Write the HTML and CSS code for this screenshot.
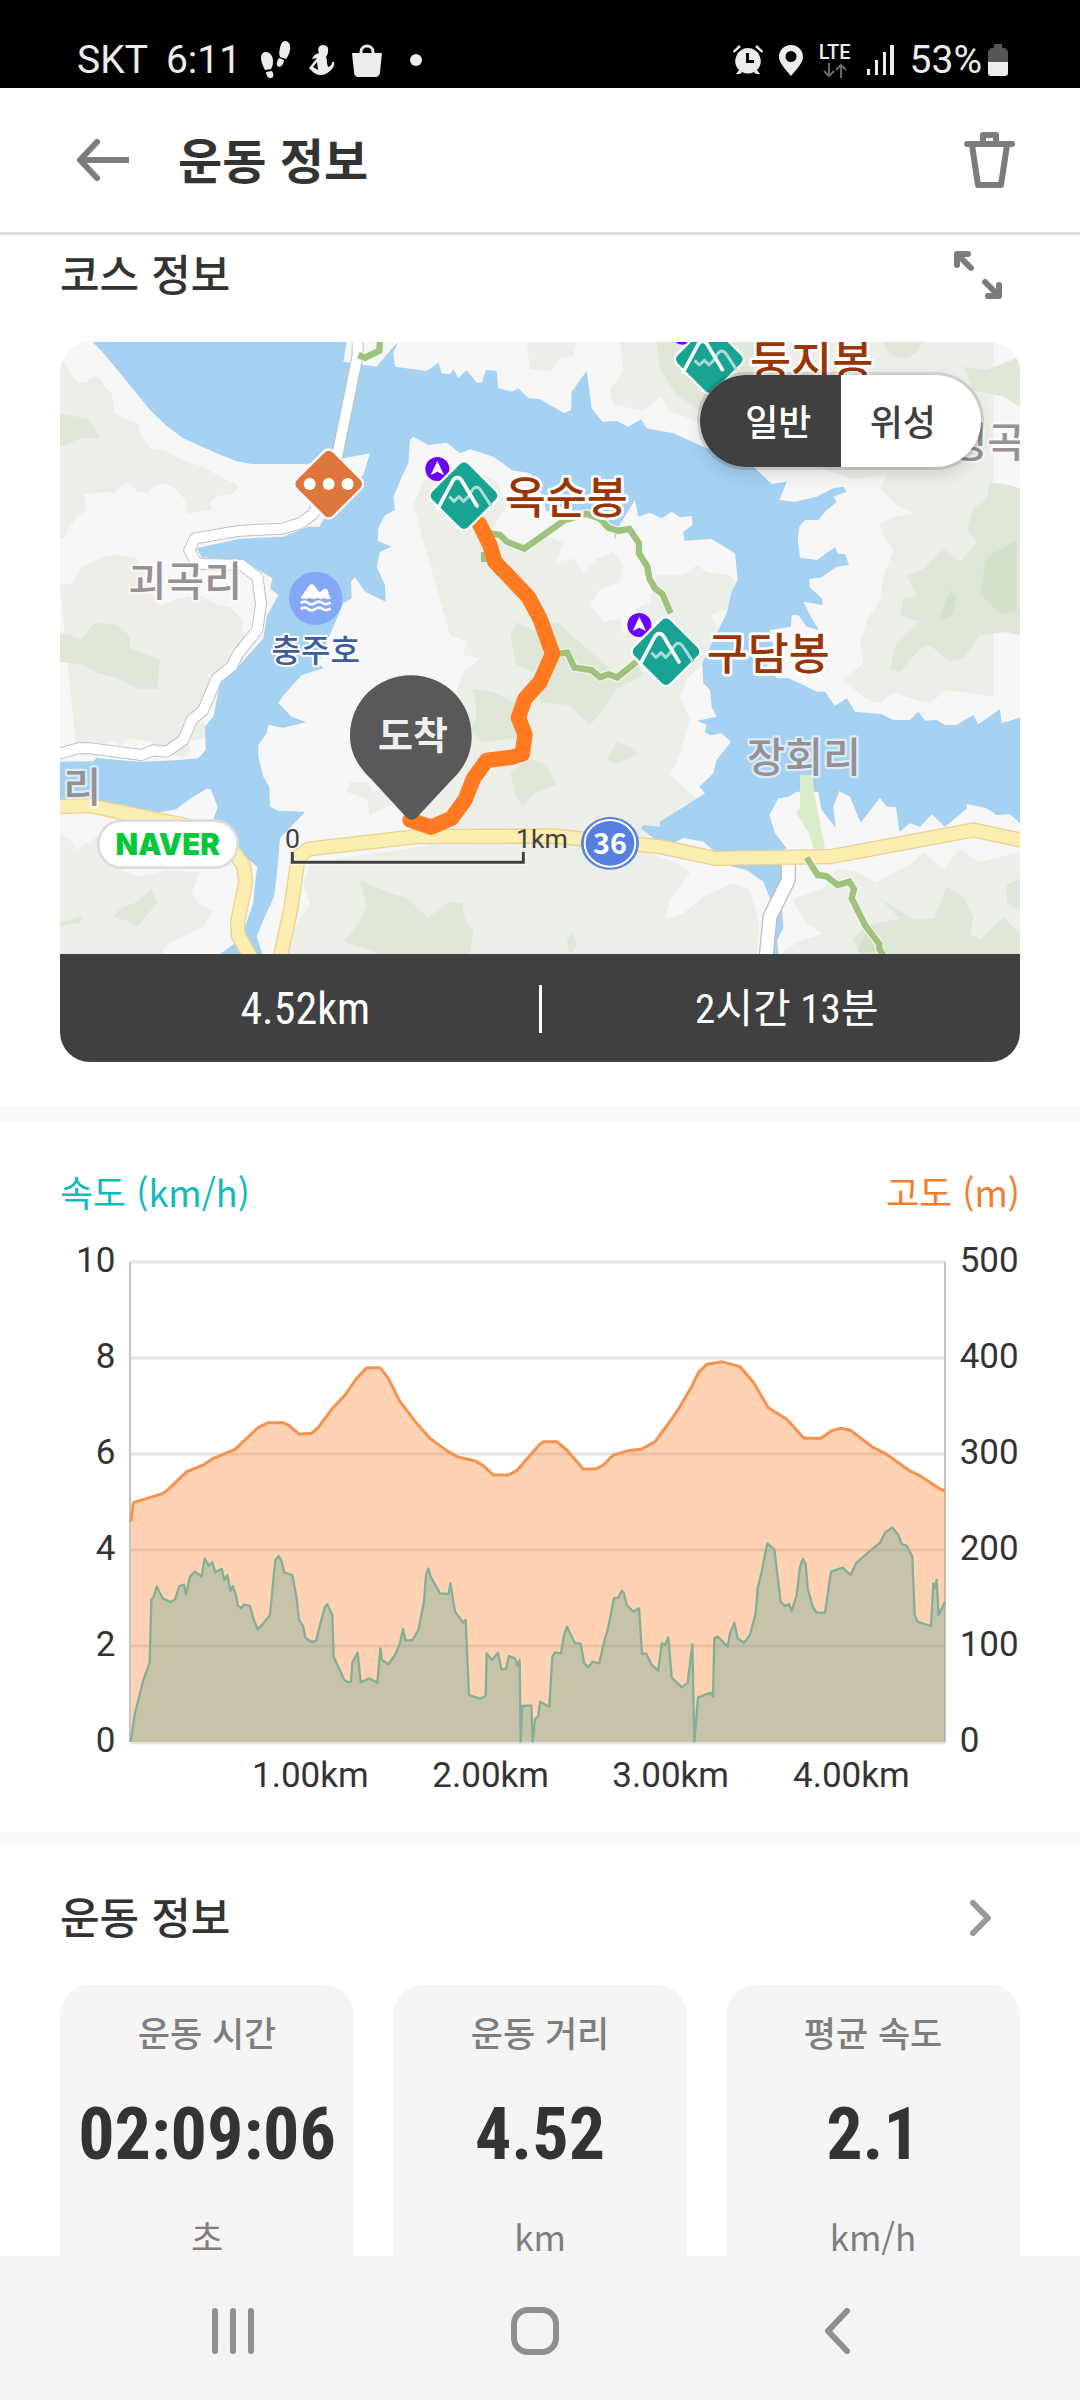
FILE: index.html
```html
<!DOCTYPE html>
<html lang="ko">

<head>
    <meta charset="utf-8">
    <meta name="viewport" content="width=device-width, initial-scale=1">
    <title>운동 정보</title>
    <link rel="stylesheet" href="styles.css">
</head>

<body>
    <div class="status">
        <div class="status-left">
            <span>SKT</span>
            <span class="clock">6:11</span>
            <svg class="ico-steps" width="30" height="38" viewBox="0 0 30 38">
                <path d="M5 11c4 0 7 4 7 9 0 4-1 6-2 8l-6 1c-2-4-4-8-4-12 0-4 2-6 5-6zM5 31l6-1c2 3 2 7-1 7-3 1-5-3-5-6zM24 0c4 0 6 4 5 9-1 4-2 7-4 9l-6-2c-1-2-1-5 0-9 1-4 2-7 5-7zM18 17l5 2c0 4-3 7-5 7-3-1-3-5 0-9z" />
            </svg>
            <svg class="ico-body" width="26" height="30" viewBox="0 0 26 30">
                <path d="M14 0c4 0 6 3 5 6 0 3-1 4-2 6 1 2 1 4 1 6l1 4c3-1 4-2 4-5h2c1 3-1 6-3 8-4 4-7 5-11 5-5 0-8-4-11-7l8-10-5 1c1-3 3-5 7-6-2-4 0-8 4-8zM8 17l-4 5 5 3z" fill-rule="evenodd" />
            </svg>
            <svg class="ico-bag" width="30" height="33" viewBox="0 0 30 33">
                <path d="M0 9h30l-2 19c0 3-2 5-5 5H7c-3 0-5-2-5-5z" />
                <path d="M9 12V8c0-8 12-8 12 0v4" fill="none" stroke="#ececec" stroke-width="3" />
            </svg>
            <span class="dot"></span>
        </div>
        <div class="status-right">
            <svg width="30" height="30" viewBox="0 0 30 30">
                <path d="M15 3a13 13 0 0 1 9 22l3 4h-4l-2-2a13 13 0 0 1-12 0l-2 2H3l3-4A13 13 0 0 1 15 3zm-2 5v10h8v-3h-5V8zM0 6l6-6 2 2-7 6zM30 6l-6-6-2 2 7 6z" fill-rule="evenodd" />
            </svg>
            <svg width="24" height="31" viewBox="0 0 24 31">
                <path d="M12 0c7 0 12 5 12 12 0 6-7 13-12 19C7 25 0 18 0 12 0 5 5 0 12 0zm0 6a5 5 0 1 0 0 11 5 5 0 0 0 0-11z" fill-rule="evenodd" />
            </svg>
            <span class="lte">
                <span>LTE</span>
                <svg width="24" height="15" viewBox="0 0 24 15">
                    <path d="M6 0v13M1 8l5 5 5-5M18 15V2M13 7l5-5 5 5" fill="none" stroke="#6a6a6a" stroke-width="2" />
                </svg>
            </span>
            <svg width="27" height="30" viewBox="0 0 27 30">
                <path d="M0 24h3v6H0zM8 15h3v15H8zM16 7h3v23h-3zM23 0h4v30h-4z" />
            </svg>
            <span class="percent">53%</span>
            <svg width="20" height="32" viewBox="0 0 20 32">
                <path d="M6 0h8v4h3l3 3v11H0V7l3-3h3z" fill="#555" />
                <path d="M0 18h20v11q0 3-3 3H3q-3 0-3-3z" />
            </svg>
        </div>
    </div>

    <header class="topbar">
        <button class="icon-btn" aria-label="뒤로">
            <svg width="53" height="44" viewBox="0 0 53 44">
                <path d="M53 22H5M21 4L4 22l17 18" fill="none" stroke="#7c7c7c" stroke-width="6" stroke-linejoin="round" stroke-linecap="round" />
            </svg>
        </button>
        <h1>운동 정보</h1>
        <button class="icon-btn trash" aria-label="삭제">
            <svg width="51" height="56" viewBox="0 0 51 56">
                <path d="M3 12h45M19 11V3h13v8M8 13l6 40h23l6-40" fill="none" stroke="#7c7c7c" stroke-width="6" stroke-linejoin="round" stroke-linecap="round" />
            </svg>
        </button>
    </header>

    <main>
        <section class="course">
            <div class="section-head">
                <h2>코스 정보</h2>
                <button class="icon-btn expand" aria-label="지도 확대">
                    <svg width="48" height="48" viewBox="0 0 48 48">
                        <path d="M17 17L4 4M14 3H3v11M31 31l13 13M34 45h11V34" fill="none" stroke="#7c7c7c" stroke-width="6" stroke-linecap="round" stroke-linejoin="round" />
                        <path d="M3 3h9l-9 9zM45 45h-9l9-9z" fill="#7c7c7c" />
                    </svg>
                </button>
            </div>

            <div class="map-card">
                <div class="map">
                    <svg class="map-canvas" viewBox="0 0 2880 1836" role="img" aria-label="코스 지도">
                        <defs>
                            <g id="peak">
                                <circle cx="-80" cy="-80" r="36" fill="#6a05ff" />
                                <path d="M-80-104l20 42-20-10-20 10z" fill="#fff" />
                                <rect x="-79" y="-79" width="158" height="158" rx="20" transform="rotate(45)" fill="#18a393" stroke="#fff" stroke-width="7" />
                                <path d="M-44 3l14 14 15-14 14 14 17-17M20-8c10-22 22-22 32-6l30 46" fill="none" stroke="#a9dcd6" stroke-width="9" stroke-linejoin="round" />
                                <path d="M-78 38l44-82c8-14 20-14 28 0l45 75" fill="none" stroke="#fff" stroke-width="11" stroke-linecap="round" stroke-linejoin="round" />
                            </g>
                        </defs>

                        <rect width="2880" height="1836" fill="#f7f7f7" />

                        <!-- hills -->
                        <g fill="#ecefe8">
                            <path d="M0 54l20 15 20 40 20 14 20-2 20-18 20 6 15 25 20 20 10 60 38 20 33 10 5 35 30 40 40 5 60 32 60 18 50 30 46 22 10 10-20 20-40 5-28 20 8 24-26 2-48 8-8-40-25-32-38-20-28 6-22 24-30-5-30-28-20 14-20 22-20-6-72 6 10 46-30 24-30 40-5 20-25 8z" />
                            <path d="M0 730l40-8 25-48 60-26 40-10 60 8 30 50 20 60 25 34 50-20 70-12 50 30 40 8 40 40-6 30 20 20-20 30-10 40-76 36-18 10 40 16-30 60-22 60 40 40-86 22 10 25-20 20-60-12-40-36-60-8-30 22-30-16-40 34-62 5z" />
                            <path d="M0 1474l30 20 20 30 60-40 30 20 40 80 60 20 80-20 100 5-25 65 25 34 40 20-30 46-50 26-50 20-20 20v16H0z" />
                            <path d="M750 1564l400-60 480 20 140 10 80 30 40 30-60 80-16 60 56-20 60-50 90-40 50 20 28 100-6 92H680l30-90 40-60-20-60z" />
                            <path d="M1060 490l30-70 70-50 80 10 70 40 30 70-50 80 40 40 80 20 40-50 60 20-20 60 50-10 30 40 40-40 50-20 30 40-10 50-60 20-30 50 40 50 50-10 10 50 30-20 10-60 40-20 20-80 80 0 40-30 30 20 70 10 30 40-40 60-50 20 30 50-20 70-80 70-20 60 30 60-30 110-30 60 80 70-60 30-30 70-130 30-40 70-110 40h-330l-100-50-30-150-90-20-60 30-10-50-60-20 10-30 50 0 20 30 40-20-20-60 60-70-60-20 20-50-60-20 20-50 60-10 40-40 50 60 60 40 50 90 20-10-10-110-20-30 20-60 50-40-50-10 10-40-50-20z" />
                            <path d="M1680 0l10 90-40 50 10 48 90 18 50-40 30 40 60 24 200 90 290 90 100-10-20 40 50 50 50 24-60 10-40 20 10 40 30 40-30 80-10 70-40 60-20 70 10 60-60 50 60 50 40 20 50-30 70 20 40 10 50-40 140 20V0z" />
                            <path d="M2200 1670l90-30 40-60 60 10 60 30 110-60 30-30 60 50 50-60 60 40 120-30v306h-720l60-40 70-20-50-30-40-66z" />
                            <path d="M1400 0l10 80 60 10 30-40 40-10 10-40zM2390 1044l40 20 30 20 40-40z" />
                        </g>
                        <g fill="#dfe7d9">
                            <path d="M0 215l80 14 20 22 22 39-60-2-30 14-32 14z" />
                            <path d="M0 870l65 20 40-48 60 5 45 35v35l90 35-8 90-52 0-70-35-60-15-40-24-70-8z" />
                            <path d="M275 1639l15 45-60 72-20-16-50-16 20-24 50-20zM0 1740l70-18-10 20-60 10z" />
                            <path d="M900 1614l90 40 50 14 65 61 60-50 40 5 14 60 21 20-10 72H960l-60-20-50-16 50-60 20-50z" />
                            <path d="M1350 880l20-40 60 30 30 60-40 60-50-20zM1240 1040l60 10 80 40 20 80-40 20-90 10-40-30 20-50zM1350 1290l60-40 50 20 30 60-60 20-40 40-20-20z" />
                            <path d="M1440 850l50-10 80 70 100 90 60-40 20 40-80 40-40 60-40 50-60-60-90-10z" />
                            <path d="M1640 1250l30-50 50 20 14 15-60 30-20-4zM1790 0l10 80 50 80 60 40 90 30 90-50 30-180z" />
                            <path d="M2470 0l20 40 50 10 30-20 20-30zM2710 74l70 10 100-40v150l-50-30-90-20z" />
                            <path d="M2790 420l60 10 30 10v440l-40-10-80 10-50 70-40 10-60-50-30 10-60 70-30-10 20-80 70-60-60-20 10-50 40-10-30-60 50-20 60-60 50 40 50-60-30-40 20-60 40-30z" />
                            <path d="M2400 1836l-20-46 40-40 100-20-60-60 100 60 60 0 40-96 50 30 30 60-10 50 30 20 70-70 50 50v62zM2880 1610l-40 20 0 50 40 30zM1520 1790l20-20 10 40-20 26z" />
                        </g>
                        <path d="M2880 600l-90 50-20 110 60 60 50-10zM2650 830l30-80 20 20-10 50-20 16zM2400 1836l30-60 20-20 40 80z" transform="translate(-10 -5)" fill="#d4e1cb" />

                        <!-- lake -->
                        <path fill="#a5d1f2" d="M98 0L135 39L185 99L270 204L320 252L370 289L470 334L530 358L575 366L740 366L850 349L930 334L910 399L880 440L790 534L778 554L745 554L670 584L540 590L410 619L425 646L540 654L580 674L638 709L630 739L655 759L620 824L610 889L530 979L480 1024L460 1124L435 1154L437 1224L415 1249L360 1254L245 1259L170 1254L110 1247L100 1258L0 1259V1380L90 1394L290 1412L348 1402L390 1370L440 1340L452 1342L473 1394L460 1434L530 1524L592 1574L585 1624L580 1684L555 1754L525 1804L480 1836H607L590 1784L610 1734L642 1664L650 1604L660 1489L735 1409L655 1406L630 1394L628 1334L610 1304L595 1244V1209L620 1174L625 1149L670 1157L738 1141L695 1124L655 1084L678 1044L660 1072L725 999L790 979L775 964L820 854L850 784L875 769L873 719L885 706L915 749L977 779L975 729L950 674L960 629L995 614L953 596L955 559L975 519L1005 504L1000 464L1030 394L1045 364L1050 294L1060 284L1105 309L1160 302L1200 334L1230 322L1300 344L1355 384L1410 394L1440 444L1460 509L1500 494L1660 554L1665 594L1675 554L1725 474L1735 524L1770 512L1805 529L1835 509L1860 526L1895 522L1898 549L1870 569L1873 596L1955 591L2025 634L2033 714L2015 749L2000 814L1950 914L1927 964L1930 1024L1950 1044L1955 1094L1970 1124L1912 1136L1940 1149L1935 1169L1950 1180L1985 1174L2013 1199L1970 1254L1960 1294L1918 1334L1935 1354L1800 1439V1454L1750 1449L1743 1459L1780 1489L1840 1504L1870 1487L1930 1499L1965 1529L2010 1572L2060 1584L2110 1619L2130 1669L2140 1836H2155L2152 1794L2170 1759L2165 1684L2170 1524L2180 1519L2145 1474L2128 1419L2155 1369L2185 1364L2210 1349H2275L2285 1404L2327 1457L2320 1394L2338 1347L2370 1364L2402 1442L2460 1367L2480 1394L2508 1396L2518 1469L2550 1444L2580 1454L2615 1417L2655 1454L2720 1400V1386L2780 1399L2810 1419L2850 1417L2880 1444V1127L2825 1144L2820 1102L2755 1147L2740 1119L2690 1149H2655L2630 1134L2595 1136L2575 1109L2550 1134H2500L2465 1117L2385 1109L2360 1069L2325 1092L2295 1049H2270L2230 1029L2185 1009H2150L2120 970L2150 964L2130 864L2193 854L2195 819H2215L2240 854L2277 864L2255 829L2230 779L2288 789L2285 769L2248 734V712L2285 706L2330 674L2367 669L2355 636H2335L2325 616L2270 654L2220 647L2213 594L2218 554L2235 534H2275L2300 504L2330 481L2320 464L2360 449L2350 434L2320 439L2270 464L2205 479L2158 474L2180 419L2135 426L2080 374L2040 349L1940 319L1840 274L1760 259L1743 232L1705 254L1670 237L1627 239L1595 199L1580 87L1535 149L1533 204L1512 214L1440 172L1405 169L1375 139L1355 149L1315 139L1310 86L1278 84L1265 122H1250L1220 84L1195 109L1180 82L1170 96L1145 94L1135 62L1100 87L1005 74L1000 34L1015 0L995 20L950 74L850 59L860 0Z" />
                        <path d="M2220 1299h38l4 50 13 70 20 101h-33l-17-50-37-58 12-13z" fill="#d8edc8" />

                        <!-- roads -->
                        <g fill="none" stroke-linejoin="round">
                            <path d="M893-20V40L832 340L790 430L760 516L720 544L665 560L540 566L405 589L388 624L408 662L430 666L545 669L592 705L603 784L592 864L535 934L515 974L470 1009L430 1104L395 1134L370 1194L320 1229L280 1225L245 1239L90 1219H55L-20 1240" stroke="#bfbfbf" stroke-width="36" />
                            <path d="M893-20V40L832 340L790 430L760 516L720 544L665 560L540 566L405 589L388 624L408 662L430 666L545 669L592 705L603 784L592 864L535 934L515 974L470 1009L430 1104L395 1134L370 1194L320 1229L280 1225L245 1239L90 1219H55L-20 1240" stroke="#fff" stroke-width="30" />
                            <path d="M2185 1550V1614L2130 1724L2118 1850" stroke="#bfbfbf" stroke-width="46" />
                            <path d="M2185 1550V1614L2130 1724L2118 1850" stroke="#fff" stroke-width="38" />
                            <path d="M-20 1394L90 1391L370 1449L500 1500L550 1570L557 1619L533 1740L535 1780L575 1850M660 1850L692 1704L715 1545L745 1521L1070 1484L1480 1482L1800 1514L1965 1549L2310 1544L2740 1464L2900 1498" stroke="#e9d394" stroke-width="46" />
                            <path d="M-20 1394L90 1391L370 1449L500 1500L550 1570L557 1619L533 1740L535 1780L575 1850M660 1850L692 1704L715 1545L745 1521L1070 1484L1480 1482L1800 1514L1965 1549L2310 1544L2740 1464L2900 1498" stroke="#fceeb1" stroke-width="38" />
                        </g>

                        <!-- trails -->
                        <g fill="none">
                            <path d="M895 39L915 47L958 26L960-10M1272 630V660M1290 574L1320 579L1340 599L1393 620L1515 534L1580 515L1620 530L1645 557L1675 566L1708 561L1737 604V634L1762 674L1768 709L1785 739L1807 756L1832 814M1500 934L1522 932L1543 977L1595 984L1620 1006L1645 997L1672 1006L1730 959M2240 1547L2273 1599L2298 1602L2333 1629L2368 1619L2382 1641L2375 1669L2415 1749L2458 1806V1820L2475 1850" stroke="#f2f7ec" stroke-width="26" />
                            <path d="M895 39L915 47L958 26L960-10M1272 630V660M1290 574L1320 579L1340 599L1393 620L1515 534L1580 515L1620 530L1645 557L1675 566L1708 561L1737 604V634L1762 674L1768 709L1785 739L1807 756L1832 814M1500 934L1522 932L1543 977L1595 984L1620 1006L1645 997L1672 1006L1730 959M2240 1547L2273 1599L2298 1602L2333 1629L2368 1619L2382 1641L2375 1669L2415 1749L2458 1806V1820L2475 1850" stroke="#a0c27f" stroke-width="19" />
                        </g>

                        <!-- recorded route -->
                        <path d="M1258 545L1290 610L1305 660L1405 765L1440 830L1478 935L1440 1020L1395 1070L1375 1127L1395 1177L1387 1236L1355 1246L1280 1255L1240 1310L1215 1374L1175 1429L1113 1456L1050 1434" fill="none" stroke="#ff7a20" stroke-width="46" stroke-linejoin="round" stroke-linecap="round" />

                        <!-- villages -->
                        <g class="place">
                            <text x="205" y="762">괴곡리</text>
                            <text x="2061" y="1290">장회리</text>
                            <text x="10" y="1380">리</text>
                            <text x="2668" y="345">정곡</text>
                        </g>

                        <!-- markers -->
                        <use href="#peak" x="1212" y="461" />
                        <use href="#peak" x="1818" y="929" />
                        <use href="#peak" x="1948" y="52" />
                        <g class="peak-name">
                            <text x="1334" y="517">옥순봉</text>
                            <text x="1940" y="984">구담봉</text>
                            <text x="2070" y="107">둥지봉</text>
                        </g>
                        <g transform="translate(806 426)">
                            <rect x="-79" y="-79" width="158" height="158" rx="20" transform="rotate(45)" fill="#de763e" stroke="#fff" stroke-width="7" />
                            <circle cx="-57" r="18" fill="#fff" />
                            <circle r="18" fill="#fff" />
                            <circle cx="57" r="18" fill="#fff" />
                        </g>
                        <g transform="translate(767 769)">
                            <circle r="80" fill="#84a7f8" />
                            <path d="M-45-2L-20-38q8-10 16 0L12-18l16-12q12 6 10 16l8 14q-12 6-20-2-12 8-20 0-12 8-24 0-12 8-27 0z" fill="#fff" />
                            <path d="M-45 14q11-8 22 0t22 0 22 0 24-2M-45 32q11-8 22 0t22 0 22 0 24-2" fill="none" stroke="#fff" stroke-width="8" />
                        </g>
                        <text class="lake-name" x="767" y="961">충주호</text>

                        <ellipse cx="1650" cy="1504" rx="87" ry="79" fill="#5580e2" />
                        <ellipse cx="1650" cy="1504" rx="76" ry="70" fill="none" stroke="#fff" stroke-width="6" />
                        <text class="route-no" x="1650" y="1535">36</text>

                        <!-- finish pin -->
                        <path d="M1053 1000c102 0 182 80 182 182 0 54-22 96-60 132l-104 112q-16 16-32 0L934 1312c-38-36-64-78-64-130 0-102 81-182 183-182z" fill="#595959" />
                        <text class="finish" x="1059" y="1220">도착</text>

                        <rect x="115" y="1436" width="418" height="141" rx="70" fill="#fff" stroke="#dcdcda" stroke-width="8" />
                        <text class="brand" x="323" y="1539">NAVER</text>

                        <path d="M697 1530v31h693v-31" fill="none" stroke="#fff" stroke-width="17" opacity=".6" />
                        <path d="M697 1530v31h693v-31" fill="none" stroke="#404040" stroke-width="9" />
                        <g class="scale">
                            <text x="675" y="1517">0</text>
                            <text x="1368" y="1517">1km</text>
                        </g>
                    </svg>
                    <div class="map-type">
                        <button class="on">일반</button>
                        <button>위성</button>
                    </div>
                </div>
                <div class="summary">
                    <span class="distance">4.52km</span>
                    <span class="time">2시간 13분</span>
                </div>
            </div>
        </section>

        <section class="chart">
            <div class="legend">
                <span class="speed">속도 (km/h)</span>
                <span class="height">고도 (m)</span>
            </div>
            <svg class="graph" viewBox="0 0 2880 1680" role="img" aria-label="속도와 고도 그래프">
                <path d="M210 66H2655M210 354H2655M210 642H2655M210 930H2655M210 1218H2655M210 1508H2655" stroke="#e3e3e3" stroke-width="9" />
                <path d="M210 66V1506M2655 66V1506" stroke="#c4c4c4" stroke-width="6" />

                <!-- altitude -->
                <path d="M213 1505V845L220 788L310 760L325 748L380 695L430 675L460 655L525 628L595 562L625 548H668L685 555L718 583L755 580L775 562L815 508L855 465L890 415L920 383H960L985 415L1020 485L1070 550L1110 595L1160 632L1195 652L1245 662L1270 677L1300 705H1345L1370 692L1440 612L1452 605H1490L1520 630L1570 687H1608L1630 675L1660 645L1705 632L1745 627L1785 605L1820 558L1855 508L1895 440L1915 398L1940 373L1985 365L2040 380L2080 427L2125 503L2180 538L2232 595H2283L2315 572L2340 565L2370 570L2440 623L2475 640L2550 693L2580 707L2640 747L2655 752V1505Z" fill="#ff7a20" fill-opacity=".34" />
                <path d="M213 845L220 788L310 760L325 748L380 695L430 675L460 655L525 628L595 562L625 548H668L685 555L718 583L755 580L775 562L815 508L855 465L890 415L920 383H960L985 415L1020 485L1070 550L1110 595L1160 632L1195 652L1245 662L1270 677L1300 705H1345L1370 692L1440 612L1452 605H1490L1520 630L1570 687H1608L1630 675L1660 645L1705 632L1745 627L1785 605L1820 558L1855 508L1895 440L1915 398L1940 373L1985 365L2040 380L2080 427L2125 503L2180 538L2232 595H2283L2315 572L2340 565L2370 570L2440 623L2475 640L2550 693L2580 707L2640 747L2655 752" fill="none" stroke="#f5924f" stroke-width="9" stroke-linejoin="round" />

                <!-- speed -->
                <path d="M212 1505L225 1420L250 1320L269 1268L274 1080L282 1068L290 1040L308 1075L332 1086L345 1078L358 1038L372 1034L378 1063L390 1010L405 995L425 1010L434 955L446 977L457 967L466 997L485 986L493 1020L502 1005L511 1053L518 1038L528 1065L533 1095L543 1105L552 1093L570 1098L580 1135L593 1168L610 1150L630 1125L640 1020L646 960L656 948L664 962L673 998L697 1005L710 1075L717 1140L730 1160L736 1193L755 1206L768 1203L776 1170L795 1100L802 1093L817 1125L821 1250L853 1320L865 1327L873 1324L877 1268L893 1238L902 1327L928 1315L952 1328L961 1225L966 1260L985 1273L1005 1245L1020 1210L1029 1166L1037 1202L1058 1200L1075 1170L1092 1085L1098 1005L1105 986L1112 1010L1140 1060L1166 1062L1171 1030L1185 1115L1210 1148L1217 1140L1227 1365L1260 1376L1277 1368L1280 1240L1296 1260L1314 1238L1324 1288L1338 1286L1347 1248L1365 1255L1373 1278L1379 1260L1382 1505L1387 1398L1414 1396L1418 1505L1425 1438L1435 1428L1440 1385L1468 1400L1477 1250L1485 1237L1503 1240L1512 1185L1521 1160L1545 1210H1562L1572 1268L1585 1282L1597 1265L1618 1270L1630 1215L1645 1160L1662 1075L1675 1073L1685 1052L1691 1057L1700 1095L1720 1115L1737 1105L1746 1242L1758 1240L1775 1275L1795 1292L1805 1210L1815 1215L1825 1192L1835 1312L1865 1342L1883 1328L1897 1213L1903 1505L1914 1372L1952 1358L1959 1370L1963 1195L1973 1190L2003 1220L2010 1180L2023 1148L2033 1195L2052 1208L2070 1185L2087 1120L2093 1045L2105 995L2122 910L2143 928L2162 1085L2175 1098L2187 1092L2195 1113L2210 1065L2220 980L2229 957L2237 972L2243 1045L2258 1100L2270 1118H2295L2313 995L2348 983L2372 1005L2388 970L2425 937L2460 908L2475 878L2497 862L2515 885L2525 912L2540 917L2557 950L2564 1125L2572 1145L2613 1158L2620 1030L2624 1045L2630 1020L2636 1125L2655 1085V1505Z" fill="#8fb4a0" fill-opacity=".5" />
                <path d="M212 1505L225 1420L250 1320L269 1268L274 1080L282 1068L290 1040L308 1075L332 1086L345 1078L358 1038L372 1034L378 1063L390 1010L405 995L425 1010L434 955L446 977L457 967L466 997L485 986L493 1020L502 1005L511 1053L518 1038L528 1065L533 1095L543 1105L552 1093L570 1098L580 1135L593 1168L610 1150L630 1125L640 1020L646 960L656 948L664 962L673 998L697 1005L710 1075L717 1140L730 1160L736 1193L755 1206L768 1203L776 1170L795 1100L802 1093L817 1125L821 1250L853 1320L865 1327L873 1324L877 1268L893 1238L902 1327L928 1315L952 1328L961 1225L966 1260L985 1273L1005 1245L1020 1210L1029 1166L1037 1202L1058 1200L1075 1170L1092 1085L1098 1005L1105 986L1112 1010L1140 1060L1166 1062L1171 1030L1185 1115L1210 1148L1217 1140L1227 1365L1260 1376L1277 1368L1280 1240L1296 1260L1314 1238L1324 1288L1338 1286L1347 1248L1365 1255L1373 1278L1379 1260L1382 1505L1387 1398L1414 1396L1418 1505L1425 1438L1435 1428L1440 1385L1468 1400L1477 1250L1485 1237L1503 1240L1512 1185L1521 1160L1545 1210H1562L1572 1268L1585 1282L1597 1265L1618 1270L1630 1215L1645 1160L1662 1075L1675 1073L1685 1052L1691 1057L1700 1095L1720 1115L1737 1105L1746 1242L1758 1240L1775 1275L1795 1292L1805 1210L1815 1215L1825 1192L1835 1312L1865 1342L1883 1328L1897 1213L1903 1505L1914 1372L1952 1358L1959 1370L1963 1195L1973 1190L2003 1220L2010 1180L2023 1148L2033 1195L2052 1208L2070 1185L2087 1120L2093 1045L2105 995L2122 910L2143 928L2162 1085L2175 1098L2187 1092L2195 1113L2210 1065L2220 980L2229 957L2237 972L2243 1045L2258 1100L2270 1118H2295L2313 995L2348 983L2372 1005L2388 970L2425 937L2460 908L2475 878L2497 862L2515 885L2525 912L2540 917L2557 950L2564 1125L2572 1145L2613 1158L2620 1030L2624 1045L2630 1020L2636 1125L2655 1085" fill="none" stroke="#85b098" stroke-width="7" stroke-linejoin="round" />

                <g class="axis left">
                    <text x="166" y="95">10</text>
                    <text x="166" y="383">8</text>
                    <text x="166" y="671">6</text>
                    <text x="166" y="959">4</text>
                    <text x="166" y="1247">2</text>
                    <text x="166" y="1535">0</text>
                </g>
                <g class="axis">
                    <text x="2699" y="95">500</text>
                    <text x="2699" y="383">400</text>
                    <text x="2699" y="671">300</text>
                    <text x="2699" y="959">200</text>
                    <text x="2699" y="1247">100</text>
                    <text x="2699" y="1535">0</text>
                </g>
                <g class="axis bottom">
                    <text x="751" y="1640">1.00km</text>
                    <text x="1292" y="1640">2.00km</text>
                    <text x="1832" y="1640">3.00km</text>
                    <text x="2374" y="1640">4.00km</text>
                </g>
            </svg>
        </section>

        <section class="stats">
            <div class="section-head">
                <h2>운동 정보</h2>
                <button class="icon-btn more" aria-label="더 보기">
                    <svg width="22" height="36" viewBox="0 0 22 36">
                        <path d="M3 3l15 15L3 33" fill="none" stroke="#999" stroke-width="6" stroke-linecap="round" stroke-linejoin="round" />
                    </svg>
                </button>
            </div>
            <div class="cards">
                <div class="card">
                    <h3>운동 시간</h3>
                    <strong>02:09:06</strong>
                    <span>초</span>
                </div>
                <div class="card">
                    <h3>운동 거리</h3>
                    <strong>4.52</strong>
                    <span>km</span>
                </div>
                <div class="card">
                    <h3>평균 속도</h3>
                    <strong>2.1</strong>
                    <span>km/h</span>
                </div>
            </div>
        </section>
    </main>

    <nav class="sysnav">
        <button aria-label="최근 앱">
            <svg width="44" height="46" viewBox="0 0 44 46">
                <path d="M4 3v40M22 3v40M40 3v40" stroke="#8f8f8f" stroke-width="6" stroke-linecap="round" />
            </svg>
        </button>
        <button aria-label="홈">
            <svg width="48" height="48" viewBox="0 0 48 48">
                <rect x="3" y="3" width="42" height="42" rx="14" fill="none" stroke="#8f8f8f" stroke-width="6" />
            </svg>
        </button>
        <button aria-label="이전">
            <svg width="27" height="46" viewBox="0 0 27 46">
                <path d="M23 3L4 23l19 20" fill="none" stroke="#8f8f8f" stroke-width="6" stroke-linecap="round" stroke-linejoin="round" />
            </svg>
        </button>
    </nav>
</body>

</html>
```

FILE: styles.css
```css
* {
    box-sizing: border-box;
}

body {
    margin: 0;
    height: 100vh;
    display: flex;
    flex-direction: column;
    background-color: #fff;
    color: #333;
    font-family: "Noto Sans CJK KR", sans-serif;
}

h1,
h2,
h3 {
    margin: 0;
}

svg {
    display: block;
}

button {
    border: none;
    background: none;
    padding: 0;
    font-family: inherit;
    color: inherit;
}

/* phone status bar */
.status {
    flex: none;
    height: 88px;
    padding: 32px 72px 0 77px;
    background-color: #000;
    color: #ececec;
    display: flex;
    justify-content: space-between;
    font-family: Roboto, sans-serif;
    font-size: 39px;
}

.status svg {
    fill: #ececec;
}

.status-left,
.status-right {
    display: flex;
    align-items: center;
}

.clock {
    margin-left: 18px;
}

.ico-steps {
    margin-left: 20px;
}

.ico-body {
    margin-left: 18px;
}

.ico-bag {
    margin-left: 17px;
}

.dot {
    width: 12px;
    height: 12px;
    margin-left: 28px;
    border-radius: 50%;
    background-color: #ececec;
}

.status-right {
    gap: 16px;
}

.lte {
    display: flex;
    flex-direction: column;
    align-items: center;
    gap: 2px;
    font-size: 20px;
    font-weight: 500;
    line-height: 18px;
}

.percent {
    margin-right: -10px;
}

/* title bar */
.topbar {
    flex: none;
    height: 147px;
    padding: 0 65px 0 76px;
    border-bottom: 3px solid #e1e1e1;
    display: flex;
    align-items: center;
}

h1 {
    margin: 0 0 4px 49px;
    font-size: 48px;
    font-weight: 700;
    line-height: 60px;
}

.trash {
    margin-left: auto;
}

main {
    flex: 1;
    min-height: 0;
    overflow-y: auto;
    scrollbar-width: none;
}

section {
    padding-left: 60px;
    padding-right: 60px;
}

.section-head {
    height: 80px;
    margin-bottom: 27px;
    display: flex;
    align-items: center;
    justify-content: space-between;
}

h2 {
    margin-bottom: 6px;
    font-size: 43px;
    font-weight: 500;
    line-height: 60px;
}

.expand {
    margin-right: 18px;
}

.more {
    margin-right: 28px;
}

.course {
    padding-bottom: 44px;
    border-bottom: 16px solid #fafafa;
}

.map-card {
    border-radius: 30px;
    overflow: hidden;
}

.map {
    position: relative;
}

.map-canvas,
.graph {
    width: 100%;
    height: auto;
}

.map-canvas text {
    paint-order: stroke;
    stroke-linejoin: round;
}

.place {
    font-size: 124px;
    font-weight: 500;
    fill: #969294;
    stroke: rgba(255, 255, 255, 0.6);
    stroke-width: 14px;
}

.peak-name {
    font-size: 134px;
    font-weight: 500;
    fill: #9a3605;
    stroke: #fff;
    stroke-width: 16px;
}

.lake-name {
    font-size: 96px;
    font-weight: 500;
    fill: #3f5b99;
    stroke: #fff;
    stroke-width: 12px;
    text-anchor: middle;
}

.route-no {
    font-size: 86px;
    font-weight: 700;
    fill: #fff;
    text-anchor: middle;
}

.finish {
    font-size: 114px;
    font-weight: 700;
    fill: #f0f0f0;
    text-anchor: middle;
}

.brand {
    font-family: Inter, sans-serif;
    font-size: 88px;
    font-weight: 900;
    fill: #03c83c;
    text-anchor: middle;
}

.scale {
    font-family: Roboto, sans-serif;
    font-size: 80px;
    fill: #404040;
}

.map-type {
    position: absolute;
    top: 33px;
    right: 39px;
    width: 281px;
    height: 92px;
    display: flex;
    border-radius: 46px;
    overflow: hidden;
    background-color: #fff;
    box-shadow: 0 0 0 3px rgba(0, 0, 0, 0.12), 0 8px 16px rgba(0, 0, 0, 0.12);
}

.map-type button {
    flex: 1;
    padding: 0 16px 2px 0;
    font-size: 36px;
    font-weight: 500;
    color: #404040;
}

.map-type .on {
    padding: 0 0 2px 16px;
    background-color: #404040;
    color: #fff;
}

.summary {
    height: 108px;
    padding-top: 2px;
    display: flex;
    align-items: center;
    background-color: #404040;
    color: #fff;
    font-family: "Roboto Condensed", Roboto, "Noto Sans CJK KR", sans-serif;
    line-height: 48px;
    text-align: center;
}

.summary span {
    flex: 1;
    padding-left: 12px;
}

.distance {
    border-right: 3px solid #fff;
    font-size: 44px;
}

.time {
    font-size: 41px;
}

/* speed and altitude */
.chart {
    padding-top: 42px;
    padding-bottom: 32px;
    border-bottom: 15px solid #fafafa;
}

.legend {
    margin-bottom: 22px;
    display: flex;
    justify-content: space-between;
    font-size: 36px;
    line-height: 54px;
}

.speed {
    color: #14b8c0;
}

.height {
    color: #f07e30;
}

.axis {
    font-family: Roboto, sans-serif;
    font-size: 105px;
    fill: #333;
}

.left {
    text-anchor: end;
}

.bottom {
    text-anchor: middle;
}

/* totals */
.stats {
    padding-top: 31px;
}

.cards {
    display: grid;
    grid-template-columns: repeat(3, minmax(0, 1fr));
    gap: 39px;
}

.card {
    padding: 20px 0;
    border-radius: 30px;
    background-color: #f5f5f5;
    display: flex;
    flex-direction: column;
    align-items: center;
    color: #7e7e7e;
    font-size: 35px;
    line-height: 54px;
}

h3 {
    font-size: 35px;
    font-weight: 500;
}

.card strong {
    margin: 28px 0 26px;
    color: #333;
    font-family: "Roboto Condensed", Roboto, "Noto Sans CJK KR", sans-serif;
    font-size: 72px;
    line-height: 96px;
}

.sysnav {
    flex: none;
    height: 144px;
    padding: 6px 92px 0 82px;
    background-color: #f4f4f4;
    display: grid;
    grid-template-columns: repeat(3, 1fr);
}

.sysnav button {
    display: flex;
    align-items: center;
    justify-content: center;
}
```
